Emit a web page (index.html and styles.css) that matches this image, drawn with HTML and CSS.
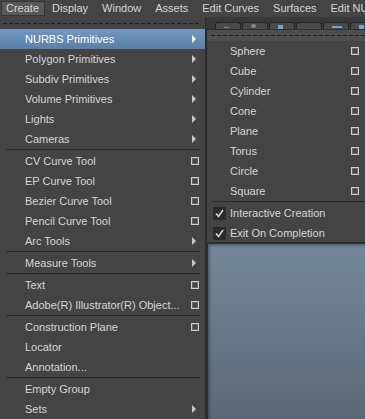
FILE: index.html
```html
<!DOCTYPE html>
<html lang="en">
<head>
    <meta charset="UTF-8">
    <meta name="viewport" content="width=device-width, initial-scale=1.0">
    <title>Create Menu</title>
    <link rel="stylesheet" href="styles.css">
</head>
<body>
    <div class="menubar">
        <span class="menubar-item activo">Create</span>
        <span class="menubar-item">Display</span>
        <span class="menubar-item">Window</span>
        <span class="menubar-item">Assets</span>
        <span class="menubar-item">Edit Curves</span>
        <span class="menubar-item">Surfaces</span>
        <span class="menubar-item">Edit NURBS</span>
    </div>

    <div class="workspace">
        <!-- Menu principal -->
        <div class="menu">
            <div class="tearoff"></div>
            <div class="item resaltado"><span class="label">NURBS Primitives</span><span class="flecha"></span></div>
            <div class="item"><span class="label">Polygon Primitives</span><span class="flecha"></span></div>
            <div class="item"><span class="label">Subdiv Primitives</span><span class="flecha"></span></div>
            <div class="item"><span class="label">Volume Primitives</span><span class="flecha"></span></div>
            <div class="item"><span class="label">Lights</span><span class="flecha"></span></div>
            <div class="item"><span class="label">Cameras</span><span class="flecha"></span></div>
            <div class="separador"></div>
            <div class="item"><span class="label">CV Curve Tool</span><span class="opcion"></span></div>
            <div class="item"><span class="label">EP Curve Tool</span><span class="opcion"></span></div>
            <div class="item"><span class="label">Bezier Curve Tool</span><span class="opcion"></span></div>
            <div class="item"><span class="label">Pencil Curve Tool</span><span class="opcion"></span></div>
            <div class="item"><span class="label">Arc Tools</span><span class="flecha"></span></div>
            <div class="separador"></div>
            <div class="item"><span class="label">Measure Tools</span><span class="flecha"></span></div>
            <div class="separador"></div>
            <div class="item"><span class="label">Text</span><span class="opcion"></span></div>
            <div class="item"><span class="label">Adobe(R) Illustrator(R) Object...</span><span class="opcion"></span></div>
            <div class="separador"></div>
            <div class="item"><span class="label">Construction Plane</span><span class="opcion"></span></div>
            <div class="item"><span class="label">Locator</span></div>
            <div class="item"><span class="label">Annotation...</span></div>
            <div class="separador"></div>
            <div class="item"><span class="label">Empty Group</span></div>
            <div class="item"><span class="label">Sets</span><span class="flecha"></span></div>
        </div>

        <div class="lado">
            <!-- Shelf parcialmente tapado -->
            <div class="shelf">
                <span class="shelf-btn"><i class="ico gris"></i></span>
                <span class="shelf-btn"><i class="ico gris redondo"></i></span>
                <span class="shelf-btn"><i class="ico azul"></i></span>
                <span class="shelf-btn"></span>
                <span class="shelf-btn"><i class="ico azul ancho"></i></span>
                <span class="shelf-btn"><i class="ico azul"></i></span>
            </div>

            <!-- Submenu NURBS -->
            <div class="submenu">
                <div class="tearoff sub"></div>
                <div class="item sub"><span class="label">Sphere</span><span class="opcion"></span></div>
                <div class="item sub"><span class="label">Cube</span><span class="opcion"></span></div>
                <div class="item sub"><span class="label">Cylinder</span><span class="opcion"></span></div>
                <div class="item sub"><span class="label">Cone</span><span class="opcion"></span></div>
                <div class="item sub"><span class="label">Plane</span><span class="opcion"></span></div>
                <div class="item sub"><span class="label">Torus</span><span class="opcion"></span></div>
                <div class="item sub"><span class="label">Circle</span><span class="opcion"></span></div>
                <div class="item sub"><span class="label">Square</span><span class="opcion"></span></div>
                <div class="separador sub"></div>
                <div class="item sub con-check">
                    <svg class="check" width="13" height="13" viewBox="0 0 13 13"><rect width="13" height="13" rx="1" fill="#2b2b2b"/><polyline points="3,6.5 5.5,9.5 10,3" fill="none" stroke="#d4d4d4" stroke-width="1.6"/></svg>
                    <span class="label">Interactive Creation</span>
                </div>
                <div class="item sub con-check">
                    <svg class="check" width="13" height="13" viewBox="0 0 13 13"><rect width="13" height="13" rx="1" fill="#2b2b2b"/><polyline points="3,6.5 5.5,9.5 10,3" fill="none" stroke="#d4d4d4" stroke-width="1.6"/></svg>
                    <span class="label">Exit On Completion</span>
                </div>
            </div>

            <div class="viewport"></div>
        </div>
    </div>
</body>
</html>
```

FILE: styles.css
```css
body {
    font-family: 'Liberation Sans', Arial, sans-serif;
    font-size: 11px;
    margin: 0;
    background-color: #444;
    color: #d6d6d6;
    width: 365px;
    height: 419px;
    overflow: hidden;
}
.menubar {
    display: flex;
    height: 17px;
    align-items: center;
    white-space: nowrap;
    overflow: hidden;
    background: #444;
}
.menubar-item {
    padding: 1px 7px 2px 7px;
    line-height: 12px;
}
.menubar-item.activo {
    margin-left: 1px;
    padding-left: 5px;
    padding-right: 6px;
    background: #585858;
    box-shadow: inset 0 0 0 1px #363636;
}
.workspace {
    display: flex;
}
.menu {
    width: 205px;
    flex-shrink: 0;
    border-right: 1px solid #2a2a2a;
    background: #444;
}
.tearoff {
    height: 12px;
    position: relative;
}
.tearoff::after {
    content: '';
    position: absolute;
    left: 3px;
    right: 5px;
    top: 6px;
    height: 1px;
    background: repeating-linear-gradient(90deg, #1e1e1e 0 4px, transparent 4px 6px);
}
.tearoff.sub {
    height: 11px;
    background: #4e4e4e;
}
.tearoff.sub::after {
    top: 5px;
    left: 4px;
    right: 0;
}
.item {
    display: flex;
    align-items: center;
    height: 20px;
    padding: 0 6px 0 25px;
    white-space: nowrap;
}
.item.sub {
    padding-left: 23px;
}
.item.con-check {
    padding-left: 6px;
}
.check {
    margin-right: 4px;
    flex-shrink: 0;
}
.label {
    flex: 1;
}
.resaltado {
    background: linear-gradient(#7298c2, #5a7ea8);
    color: #fff;
}
.flecha {
    width: 0;
    height: 0;
    margin-right: 3px;
    border-left: 4px solid #c8c8c8;
    border-top: 4px solid transparent;
    border-bottom: 4px solid transparent;
}
.resaltado .flecha {
    border-left-color: #fff;
}
.opcion {
    width: 6px;
    height: 6px;
    border: 1px solid #cfcfcf;
    box-shadow: inset 0 0 0 1px #6a6a6a;
}
.separador {
    height: 1px;
    margin: 0 5px 1px 6px;
    background: #2c2c2c;
}
.separador.sub {
    margin-left: 5px;
    margin-right: 0;
}
.lado {
    flex: 1;
    min-width: 0;
    display: flex;
    flex-direction: column;
}
.shelf {
    height: 12px;
    display: flex;
    align-items: flex-end;
    gap: 1px;
    padding-left: 9px;
    background: #383838;
    overflow: hidden;
}
.shelf-btn {
    flex-shrink: 0;
    width: 24px;
    height: 6px;
    border: 1px solid #262626;
    border-bottom: none;
    border-radius: 3px 3px 0 0;
    background: #4a4a4a;
    position: relative;
}
.ico {
    position: absolute;
    left: 8px;
    top: 2px;
    width: 5px;
    height: 4px;
}
.ico.gris {
    background: #8a8a8a;
    height: 1px;
    top: 4px;
}
.ico.redondo {
    height: 4px;
    top: 1px;
    border-radius: 50%;
}
.ico.azul {
    background: #6fa6d8;
}
.ico.ancho {
    width: 10px;
    height: 2px;
    top: 3px;
}
.submenu {
    height: 213px;
    border-left: 1px solid #2a2a2a;
    border-top: 1px solid #2f2f2f;
    box-sizing: border-box;
    background: #444;
}
.viewport {
    flex: 1;
    margin-left: -1px;
    border-left: 3px solid #2d2d2d;
    border-top: 2px solid #2d2d2d;
    background: linear-gradient(#74879a, #5b6876);
    box-shadow: inset 2px 2px 2px rgba(0,0,0,0.25);
}
```
